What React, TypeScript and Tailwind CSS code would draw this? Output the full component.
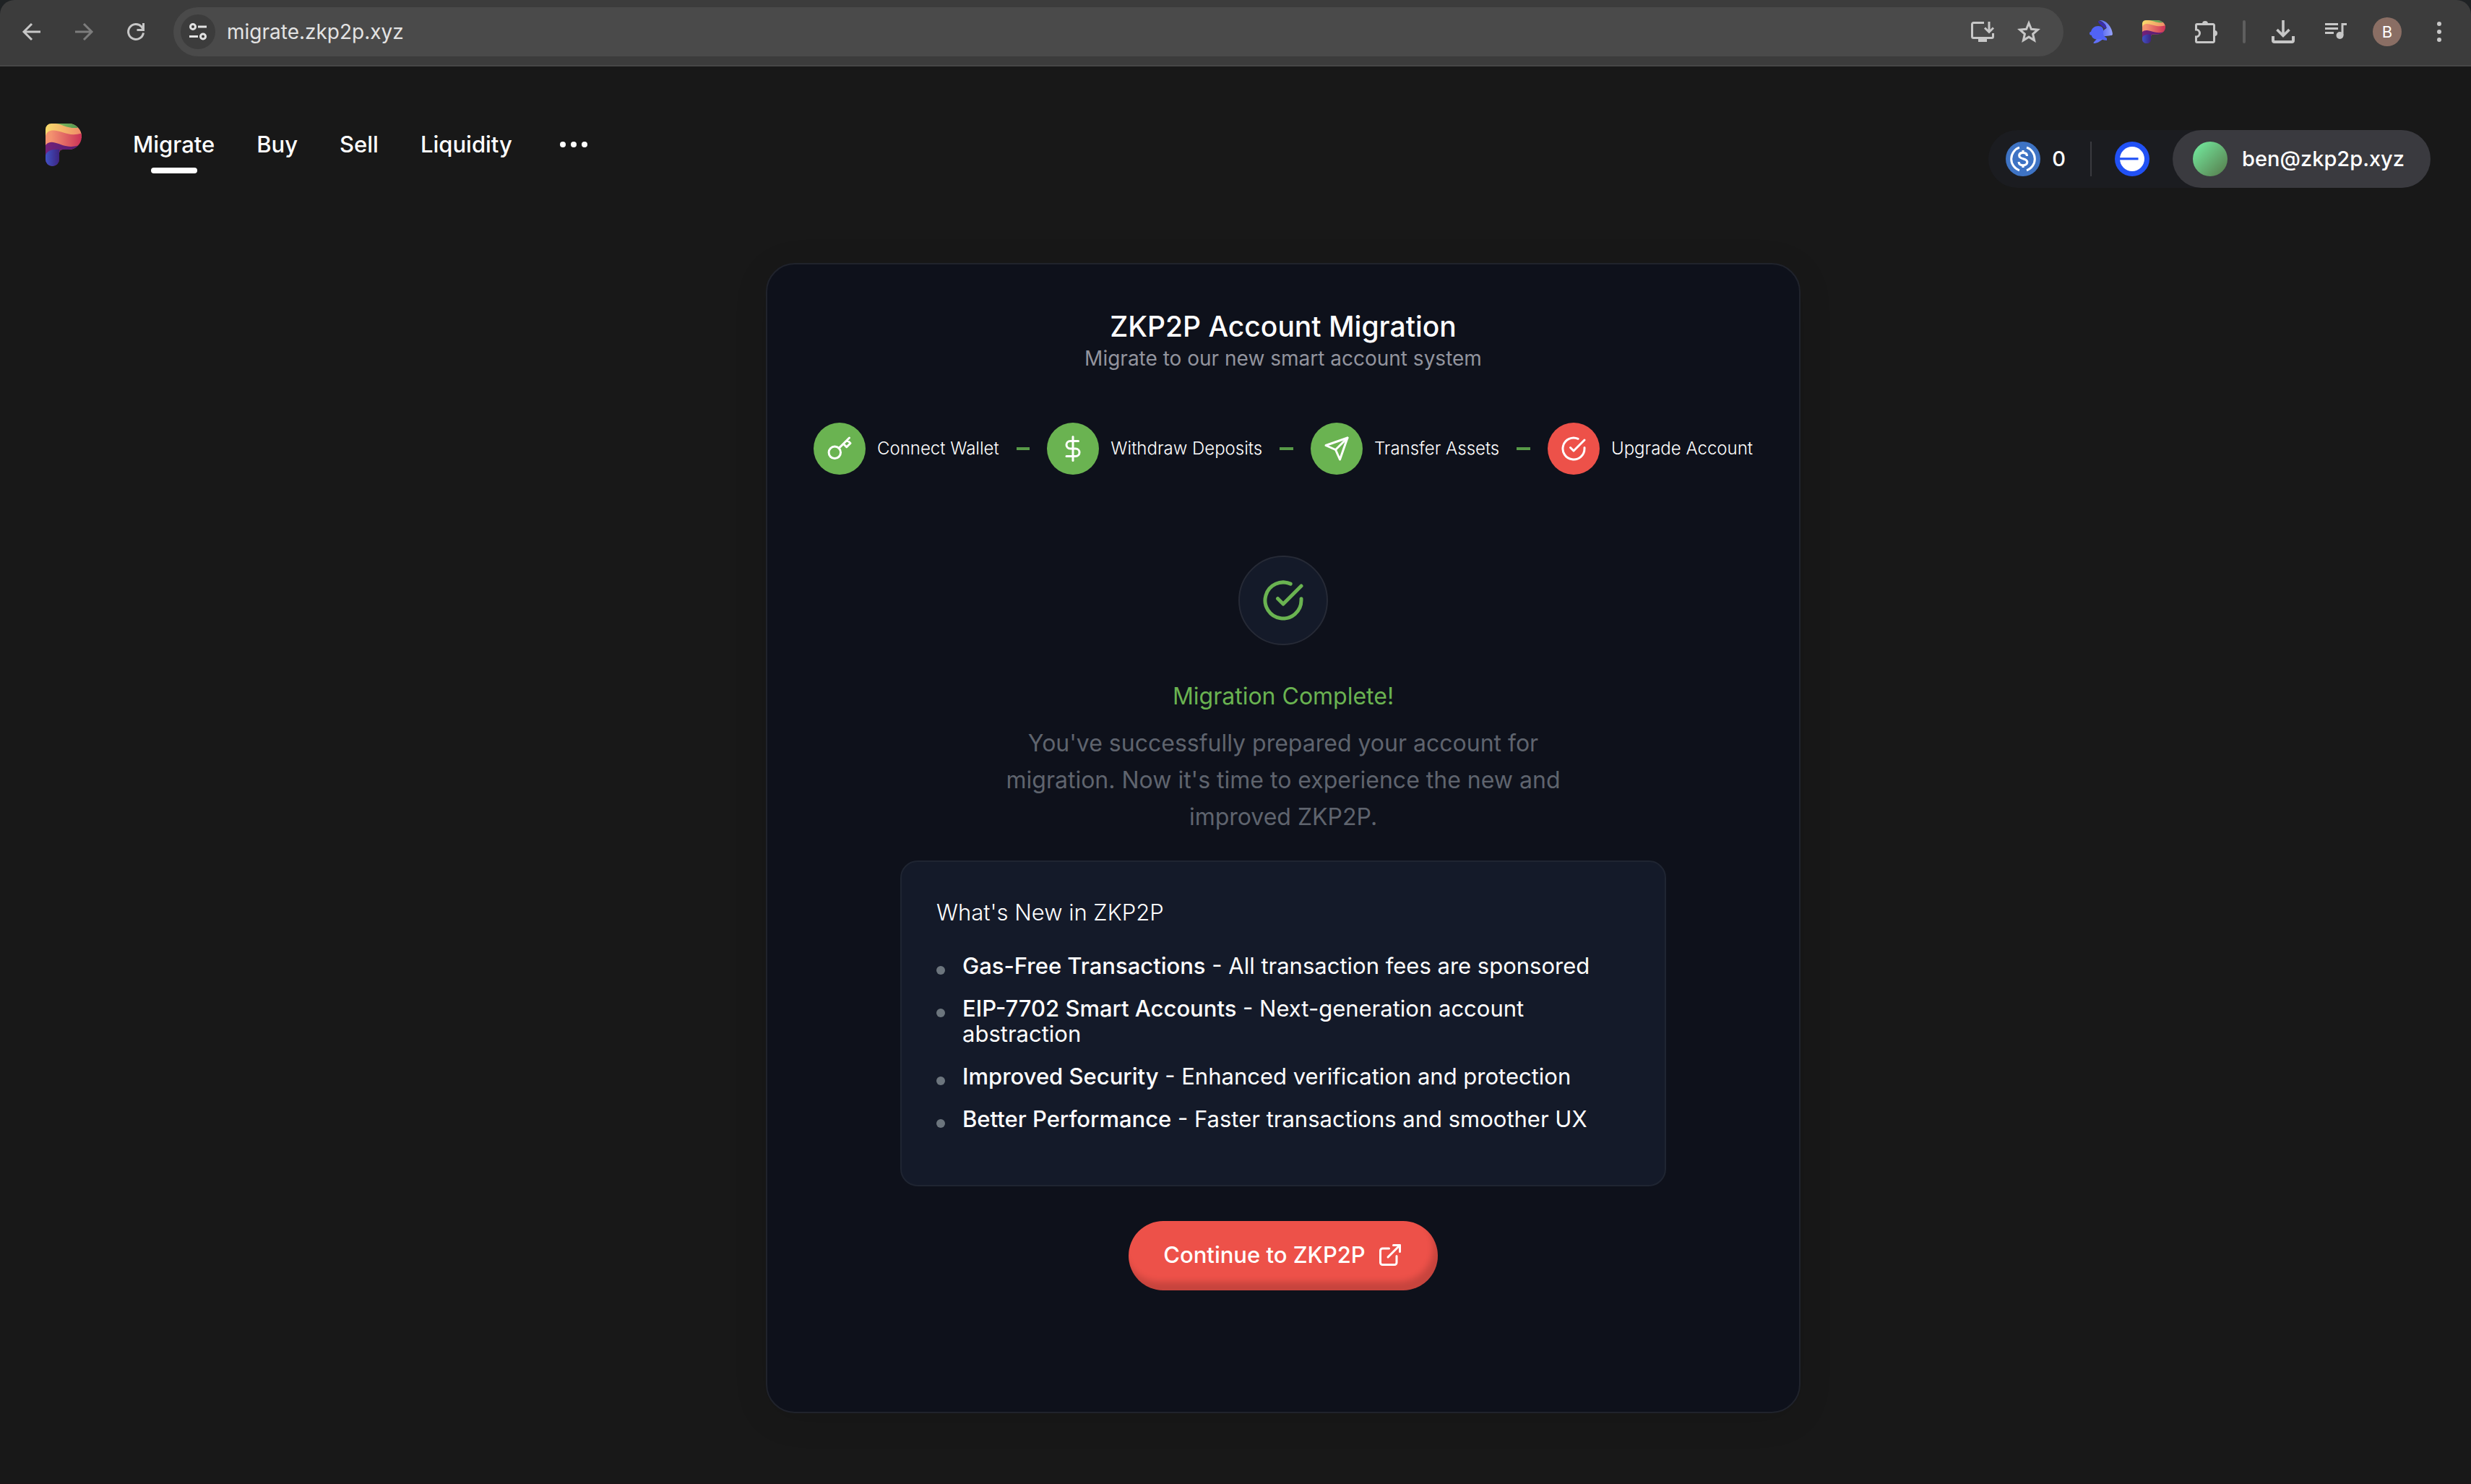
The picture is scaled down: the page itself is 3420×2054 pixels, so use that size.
import { useId } from "react";
import type { ComponentType, ReactNode } from "react";
import { FiCheckCircle, FiDollarSign, FiExternalLink, FiKey, FiSend } from "react-icons/fi";

function ChromeButton({ label, className, children }: { label: string; className: string; children: ReactNode }) {
  return (
    <button type="button" aria-label={label} className={`flex shrink-0 items-center justify-center ${className}`}>
      {children}
    </button>
  );
}

function PeerLogo({ className }: { className: string }) {
  const id = useId();
  return (
    <svg viewBox="0 0 50 59" preserveAspectRatio="none" className={className} aria-hidden="true">
      <defs>
        <linearGradient id={`${id}a`} x1="0" x2="1" y1="0" y2="0">
          <stop offset="0" stopColor="#f8dc6c" />
          <stop offset="1" stopColor="#f08a68" />
        </linearGradient>
        <linearGradient id={`${id}b`} x1="0" x2="1" y1="0" y2="0">
          <stop offset="0.15" stopColor="#f3926f" />
          <stop offset="1" stopColor="#cb3157" />
        </linearGradient>
        <linearGradient id={`${id}c`} x1="0" x2="1" y1="0" y2="0">
          <stop offset="0" stopColor="#74217a" />
          <stop offset="1" stopColor="#4d1c70" />
        </linearGradient>
        <linearGradient id={`${id}d`} x1="0" x2="1" y1="0" y2="0">
          <stop offset="0" stopColor="#3f52c4" />
          <stop offset="1" stopColor="#3d2480" />
        </linearGradient>
        <linearGradient id={`${id}e`} x1="0" x2="1" y1="0" y2="0">
          <stop offset="0" stopColor="#86bd5c" />
          <stop offset="1" stopColor="#4b8f50" />
        </linearGradient>
        <clipPath id={`${id}f`}>
          <path d="M8 0h24a18 18 0 0 1 0 36h-8q-5 0-5 5v8.500a9.500 9.500 0 0 1-19 0V8a8 8 0 0 1 8-8z" />
        </clipPath>
      </defs>
      <g clipPath={`url(#${id}f)`}>
        <path d="M0 0h50v20H0z" fill={`url(#${id}a)`} />
        <path d="M14 0c9 1 16 7 30 6l6-6z" fill={`url(#${id}e)`} />
        <path d="M0 17C2 11 6 9 12 9.500c12 1 20 9 38 4V40H0z" fill={`url(#${id}b)`} />
        <path d="M0 30c3-4 8-5 13-3.500C23 29 32 35 46 30l4 29H0z" fill={`url(#${id}c)`} />
        <path d="M0 44c2-6 8-9 19-8v23H0z" fill={`url(#${id}d)`} />
      </g>
    </svg>
  );
}

function Toolbar() {
  return (
    <div className="bg-[#1f2224]">
      <div className="flex h-[92px] items-center rounded-t-[20px] border-b-2 border-[#474747] bg-[#3c3c3c] pb-0.5 pr-7 pl-7 text-[#c7c7c7]">
        <ChromeButton label="Back" className="size-8">
          <svg viewBox="0 0 32 32" className="size-8" fill="none" stroke="currentColor" strokeWidth="3">
            <path d="M28 16H6M16 5 5 16l11 11" />
          </svg>
        </ChromeButton>
        <ChromeButton label="Forward" className="ml-10 size-8 text-[#7d7d7d]">
          <svg viewBox="0 0 32 32" className="size-8" fill="none" stroke="currentColor" strokeWidth="3">
            <path d="M4 16h22M16 5l11 11-11 11" />
          </svg>
        </ChromeButton>
        <ChromeButton label="Reload" className="ml-10 size-8">
          <svg viewBox="0 0 32 32" className="size-8" fill="none" stroke="currentColor" strokeWidth="3">
            <path d="M26.500 17.500A10.500 10.500 0 1 1 24 9l2 3.500" />
            <path d="M26.500 4v9.500H17.500" />
          </svg>
        </ChromeButton>
        <div className="ml-9 flex h-[68px] min-w-0 flex-1 items-center rounded-full bg-[#4a4a4a] pr-8 pl-2.5">
          <ChromeButton label="View site information" className="size-12 rounded-full bg-[#3c3c3c] text-[#e3e3e3]">
            <svg viewBox="0 0 24 24" className="size-6" fill="none" stroke="currentColor" strokeWidth="3">
              <circle cx="5" cy="5" r="3.500" />
              <path d="M12 5h12M0 18.500h12" />
              <circle cx="19" cy="18.500" r="3.500" />
            </svg>
          </ChromeButton>
          <input
            aria-label="Address"
            defaultValue="migrate.zkp2p.xyz"
            className="ml-4 min-w-0 flex-1 bg-transparent text-[28px] leading-9 text-[#e3e3e3] outline-none"
          />
          <ChromeButton label="Install app" className="size-8">
            <svg viewBox="0 0 32 32" className="size-8" fill="none" stroke="currentColor" strokeWidth="3">
              <path d="M18 3.500H3.500a2 2 0 0 0-2 2v17a2 2 0 0 0 2 2h25a2 2 0 0 0 2-2V18" />
              <path d="M25 2v14M19 10.500l6 6 6-6" />
              <path d="M10 25h12v5H10z" fill="currentColor" stroke="none" />
            </svg>
          </ChromeButton>
          <ChromeButton label="Bookmark this tab" className="ml-8 size-8">
            <svg viewBox="0 0 32 32" className="size-8" fill="none" stroke="currentColor" strokeWidth="3">
              <path d="M16 4l3.400 8.300 9 .8-6.800 5.900 2 8.800-7.600-4.700-7.600 4.700 2-8.800-6.800-5.900 9-.8z" />
            </svg>
          </ChromeButton>
        </div>
        <div className="ml-9 flex items-center gap-[41px]">
          <ChromeButton label="Wallet extension" className="size-8">
            <svg viewBox="0 0 32 32" className="size-8">
              <defs>
                <linearGradient id="rabbit-head" x1="0" x2="1" y1="0" y2="0">
                  <stop offset="0" stopColor="#4a5cf0" />
                  <stop offset="1" stopColor="#98a3fb" />
                </linearGradient>
              </defs>
              <path d="M13 0c8-1 15 6 17.500 13 1.500 5 2.500 8-1 8-6 1-10 2-16 0 3-3 6-8 10-10 0-5-5-9-10.500-11z" fill="url(#rabbit-head)" />
              <path d="M12 1c6 1 10 4 11.500 9l-3 1.500C18 7 12 6 12 1z" fill="#3a2cae" />
              <path d="M12 8c6 0 8 4 7 9-1 3 1 5 5 8v3c-3 0-5-1-8-2-7 2-13-1-13-5-4 0-4-5-1-5 1-5 5-8 10-8z" fill="#5163f5" />
              <path d="M10 26l9 0c-3 2-8 6-12 6-3 0-1-2 3-6z" fill="#6070f8" />
            </svg>
          </ChromeButton>
          <ChromeButton label="ZKP2P extension" className="size-8">
            <PeerLogo className="size-8" />
          </ChromeButton>
          <ChromeButton label="Extensions" className="size-8">
            <svg viewBox="0 0 32 32" className="size-8" fill="none" stroke="currentColor" strokeWidth="3">
              <path d="M1.500 13V7a1.500 1.500 0 0 1 1.500-1.500h22A1.500 1.500 0 0 1 26.500 7v22a1.500 1.500 0 0 1-1.500 1.500H3A1.500 1.500 0 0 1 1.500 29v-6a5 5 0 0 0 0-10z" />
              <path d="M10 5a4 4 0 0 1 8 0zM27 14a4 4 0 0 1 0 8z" fill="currentColor" stroke="none" />
            </svg>
          </ChromeButton>
        </div>
        <div className="ml-[34px] h-8 w-1 rounded-full bg-[#5e5e5e]" />
        <div className="ml-9 flex items-center gap-9">
          <ChromeButton label="Downloads" className="size-8">
            <svg viewBox="0 0 32 32" className="size-8" fill="none" stroke="currentColor">
              <path d="M16 0v21M7.500 13l8.500 8.500 8.500-8.500" strokeWidth="3.600" />
              <path d="M2 22v6a2 2 0 0 0 2 2h24a2 2 0 0 0 2-2v-6" strokeWidth="4" />
            </svg>
          </ChromeButton>
          <ChromeButton label="Media controls" className="h-8 w-9">
            <svg viewBox="0 0 36 32" className="h-8 w-9" fill="none" stroke="currentColor" strokeWidth="3">
              <path d="M6 5.500h18M6 11.500h18M6 17.500h12M30 21V5.500h6" />
              <circle cx="26.500" cy="21" r="5" fill="currentColor" stroke="none" />
            </svg>
          </ChromeButton>
          <ChromeButton label="Profile" className="size-10 rounded-full bg-[#8a6e64] text-[22px] text-white">
            B
          </ChromeButton>
          <ChromeButton label="More" className="size-8">
            <svg viewBox="0 0 32 32" className="size-8" fill="currentColor">
              <circle cx="16" cy="5" r="3" />
              <circle cx="16" cy="16" r="3" />
              <circle cx="16" cy="27" r="3" />
            </svg>
          </ChromeButton>
        </div>
      </div>
    </div>
  );
}

function UsdcIcon() {
  return (
    <svg viewBox="0 0 48 48" className="size-12" fill="none" stroke="#fff" strokeWidth="2.800" aria-hidden="true">
      <circle cx="24" cy="24" r="24" fill="#3e73c4" stroke="none" />
      <path d="M19 8.200a16.700 16.700 0 0 0 0 31.600M29 8.200a16.700 16.700 0 0 1 0 31.600" strokeWidth="3" />
      <path d="M29.500 20c0-3-2.200-4.700-5.500-4.700s-5.300 1.700-5.300 4.100c0 5.800 11.100 2.800 11.100 8.900 0 2.700-2.400 4.500-5.800 4.500s-5.900-1.900-5.900-4.900M24 12v3.500M24 32.500V36" strokeWidth="3.200" />
    </svg>
  );
}

function BaseIcon() {
  return (
    <svg viewBox="0 0 48 48" className="size-12" aria-hidden="true">
      <circle cx="24" cy="24" r="24" fill="#2151f5" />
      <circle cx="24" cy="24" r="17" fill="#fff" />
      <path d="M6 22.200h26.500v3.200H6z" fill="#2151f5" />
    </svg>
  );
}

function Header() {
  return (
    <header className="flex items-start justify-between pt-[88px] pr-14 pl-[63px] text-white">
      <div className="flex h-10 items-center gap-[71px]">
        <a href="#home" aria-label="ZKP2P home">
          <PeerLogo className="h-[59px] w-[50px]" />
        </a>
        <nav className="flex items-center gap-[58px] text-[31px] leading-10 font-medium">
          <a href="#migrate" aria-current="page" className="relative">
            Migrate
            <span className="absolute -bottom-5 left-1/2 h-2 w-16 -translate-x-1/2 rounded-[4px] bg-white" />
          </a>
          <a href="#buy">Buy</a>
          <a href="#sell">Sell</a>
          <a href="#liquidity">Liquidity</a>
          <button type="button" aria-label="More pages" className="ml-2">
            <svg viewBox="0 0 38 8" className="h-2 w-[38px]" fill="currentColor">
              <circle cx="4" cy="4" r="4" />
              <circle cx="19" cy="4" r="4" />
              <circle cx="34" cy="4" r="4" />
            </svg>
          </button>
        </nav>
      </div>
      <div className="flex h-20 items-center rounded-full bg-[#1b1c20] pl-6 text-[29px] font-medium">
        <UsdcIcon />
        <span className="ml-4">0</span>
        <div className="ml-[34px] h-12 w-0.5 bg-[#3a3a3f]" />
        <button type="button" aria-label="Network: Base" className="ml-8">
          <BaseIcon />
        </button>
        <button type="button" className="ml-8 flex h-20 items-center gap-5 rounded-full bg-[#3a3a3f] pr-9 pl-7">
          <span className="size-12 rounded-full bg-linear-135 from-[#73f2a4] to-[#54794a]" />
          ben@zkp2p.xyz
        </button>
      </div>
    </header>
  );
}

type Step = { label: string; Icon: ComponentType<{ className?: string }>; current?: boolean };

const steps: Step[] = [
  { label: "Connect Wallet", Icon: FiKey },
  { label: "Withdraw Deposits", Icon: FiDollarSign },
  { label: "Transfer Assets", Icon: FiSend },
  { label: "Upgrade Account", Icon: FiCheckCircle, current: true },
];

const features = [
  { name: "Gas-Free Transactions", detail: "All transaction fees are sponsored" },
  { name: "EIP-7702 Smart Accounts", detail: "Next-generation account abstraction" },
  { name: "Improved Security", detail: "Enhanced verification and protection" },
  { name: "Better Performance", detail: "Faster transactions and smoother UX" },
];

export default function App() {
  return (
    <div className="min-h-screen border-b-2 border-[#1b1517] bg-[#181818] font-['Inter',sans-serif]">
      <Toolbar />
      <Header />
      <main className="mt-[104px] pb-24 pl-[132px]">
        <section className="mx-auto flex w-full max-w-[1432px] flex-col items-center rounded-[40px] border-2 border-[#20232c] bg-[#0e111b] px-16 pt-[62px] pb-[168px] shadow-[0_8px_48px_rgba(0,0,0,0.10)]">
          <h1 className="text-[39px] leading-12 font-medium text-white">ZKP2P Account Migration</h1>
          <p className="text-[28px] leading-10 text-[#92949e]">Migrate to our new smart account system</p>

          <ol className="mt-[69px] flex w-full items-center">
            {steps.map(({ label, Icon, current }, i) => (
              <li key={label} className={i > 0 ? "flex flex-auto items-center" : "flex flex-none items-center"}>
                {i > 0 && <span className="mx-6 h-1 min-w-4 flex-1 bg-[#589a48]" />}
                <span
                  className={`flex size-[72px] shrink-0 items-center justify-center rounded-full text-white ${
                    current ? "bg-[#ed5149]" : "bg-[#6ab351]"
                  }`}
                >
                  <Icon className="size-9" />
                </span>
                <span className="ml-4 text-2xl font-light whitespace-nowrap text-white">{label}</span>
              </li>
            ))}
          </ol>

          <div className="mt-28 flex size-[124px] items-center justify-center rounded-full border-2 border-[#262a36] bg-[#141a29] text-[#6ab351]">
            <FiCheckCircle className="size-[60px]" />
          </div>
          <h2 className="mt-[51px] text-[32px] leading-10 text-[#6ab351]">Migration Complete!</h2>
          <p className="mt-[19px] max-w-[800px] text-center text-[32px] leading-[51px] text-[#5f646e]">
            You've successfully prepared your account for migration. Now it's time to experience the new and improved
            ZKP2P.
          </p>

          <div className="mt-[35px] w-full max-w-[1060px] rounded-3xl border-2 border-[#1f2532] bg-[#141a29] px-12 pt-[50px] pb-[74px] text-white">
            <h3 className="text-[31px] leading-10 font-light">What's New in ZKP2P</h3>
            <ul className="mt-9 flex flex-col gap-6 text-[31px] leading-[35px]">
              {features.map(({ name, detail }) => (
                <li key={name} className="flex items-start gap-6">
                  <span className="mt-[18px] size-3 shrink-0 rounded-full bg-[#6c757d]" />
                  <span>
                    <strong className="font-medium">{name}</strong> - {detail}
                  </span>
                </li>
              ))}
            </ul>
          </div>

          <button
            type="button"
            className="mt-12 flex h-24 items-center gap-4 rounded-full bg-[#ed5149] px-12 pb-0.5 text-[31px] font-medium text-white shadow-[inset_-6px_-12px_8px_rgba(0,0,0,0.16)]"
          >
            Continue to ZKP2P
            <FiExternalLink className="size-9" />
          </button>
        </section>
      </main>
    </div>
  );
}
